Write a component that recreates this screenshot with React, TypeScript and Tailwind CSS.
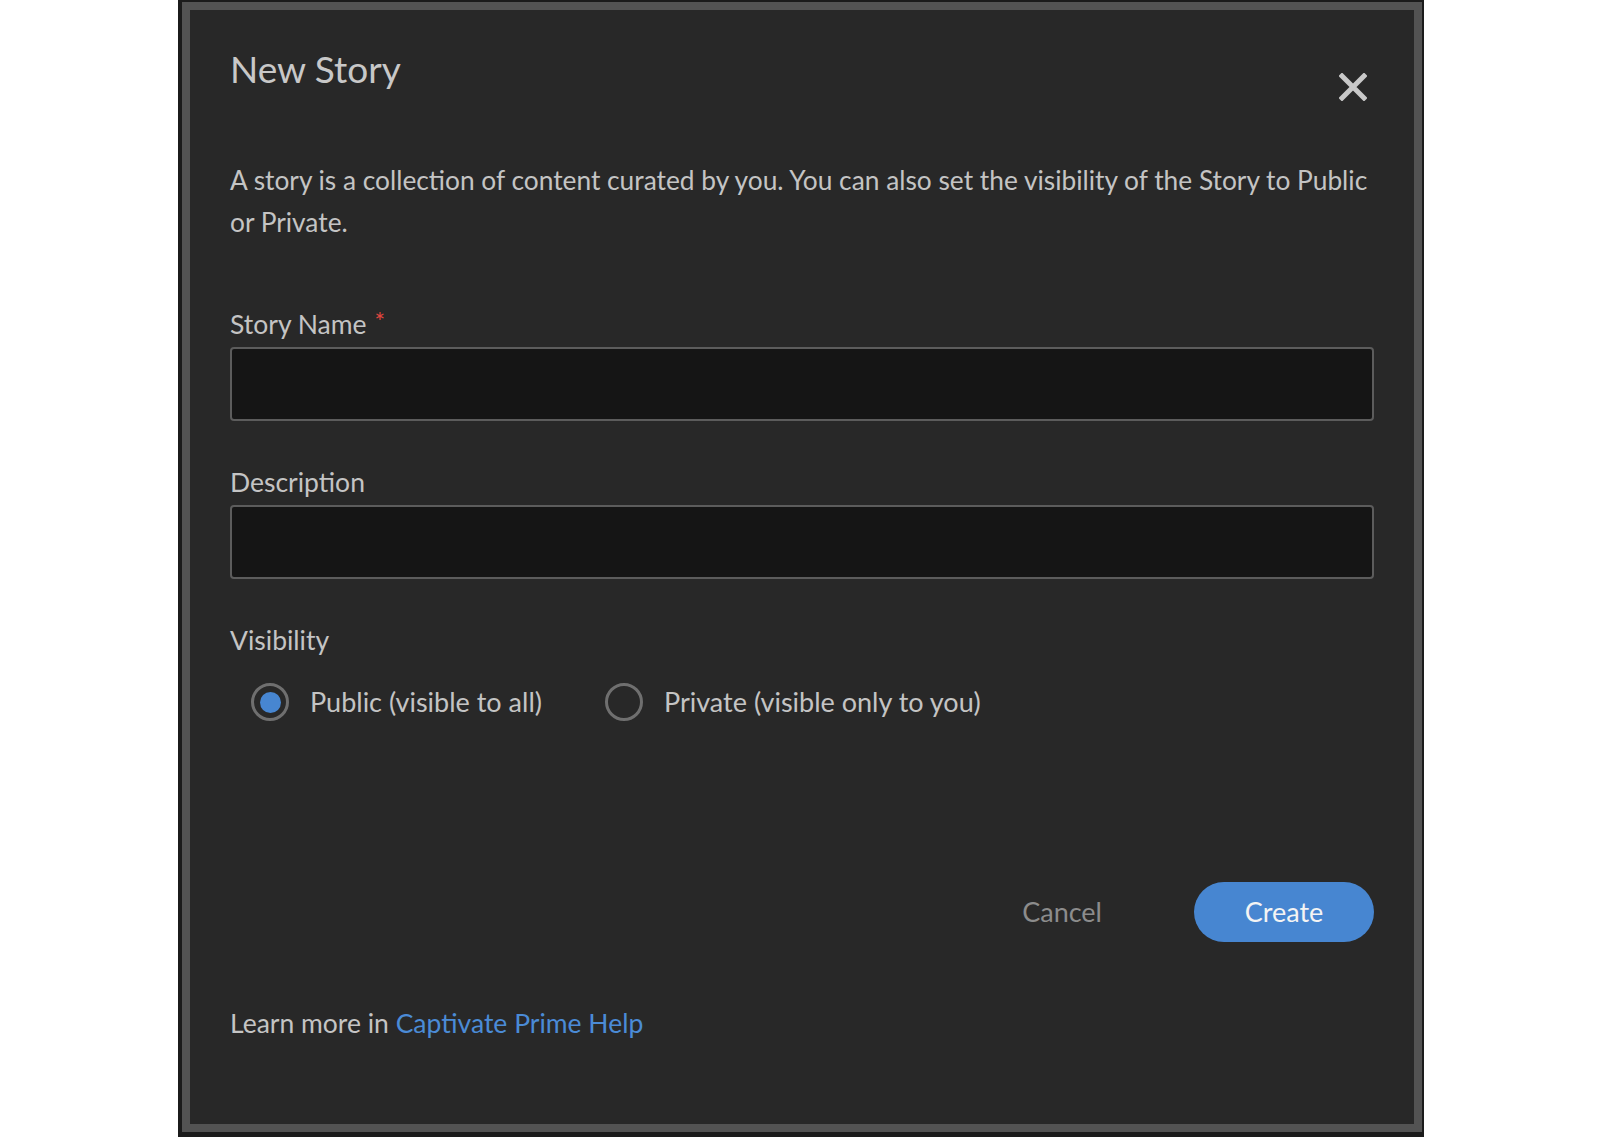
import { useState } from "react";

const font = { fontFamily: '"Lato", "Open Sans", sans-serif' };

const Radio = ({ checked, label, onSelect }: { checked: boolean; label: string; onSelect: () => void }) => (
  <label onClick={onSelect} className="flex items-center gap-[21px] cursor-pointer">
    <span className="w-[38px] h-[38px] rounded-full border-[3px] border-[#6f6f6f] flex items-center justify-center shrink-0">
      {checked && <span className="w-[21px] h-[21px] rounded-full bg-[#4786d1]" />}
    </span>
    <span className="text-[27px] leading-[34px] text-[#c4c4c4]">{label}</span>
  </label>
);

export default function App() {
  const [visibility, setVisibility] = useState("public");

  return (
    <div className="w-full h-[1137px] bg-white flex" style={font}>
      <div className="ml-[178px] w-[1246px] h-full bg-[#1b1b1b] pl-[4px] pr-[2px] pt-[2px] pb-[5px]">
        <div className="h-full border-8 border-[#535353] bg-[#282828] px-[40px] pt-[37px] flex flex-col">
          <div className="flex items-start justify-between">
            <h1 className="text-[37px] leading-[44px] text-[#c8c8c8] font-normal">New Story</h1>
            <button className="mt-[26px] mr-[7px] text-[#c8c8c8]">
              <svg width="28" height="28" viewBox="0 0 28 28">
                <path d="M3 3 L25 25 M25 3 L3 25" stroke="currentColor" strokeWidth="5" strokeLinecap="square" />
              </svg>
            </button>
          </div>

          <p className="mt-[58px] text-[26.3px] leading-[42px] text-[#c4c4c4]">
            A story is a collection of content curated by you. You can also set the visibility of the Story to Public or Private.
          </p>

          <label className="mt-[66px] text-[26.5px] leading-[30px] text-[#c4c4c4]">
            Story Name<span className="ml-[8px] text-[#e0463f] align-top text-[25px] leading-[24px]">*</span>
          </label>
          <input className="mt-[8px] h-[74px] w-full bg-[#151515] border-2 border-[#5c5c5c] rounded-[4px] outline-none px-4 text-[#d0d0d0] text-[25px]" />

          <label className="mt-[46px] text-[26.5px] leading-[30px] text-[#c4c4c4]">Description</label>
          <input className="mt-[8px] h-[74px] w-full bg-[#151515] border-2 border-[#5c5c5c] rounded-[4px] outline-none px-4 text-[#d0d0d0] text-[25px]" />

          <label className="mt-[46px] text-[26.5px] leading-[30px] text-[#c4c4c4]">Visibility</label>
          <div className="mt-[28px] ml-[21px] flex items-center gap-[63px]">
            <Radio checked={visibility === "public"} label="Public (visible to all)" onSelect={() => setVisibility("public")} />
            <Radio checked={visibility === "private"} label="Private (visible only to you)" onSelect={() => setVisibility("private")} />
          </div>

          <div className="mt-[161px] flex items-center justify-end gap-[92px]">
            <button className="text-[27px] text-[#8c8c8c]">Cancel</button>
            <button className="w-[180px] h-[60px] rounded-full bg-[#4786d1] text-[27px] text-[#f4f4f4]">Create</button>
          </div>

          <p className="mt-[64px] text-[26.5px] leading-[34px] text-[#c4c4c4]">
            Learn more in <a className="text-[#4b8bd6]">Captivate Prime Help</a>
          </p>
        </div>
      </div>
    </div>
  );
}
